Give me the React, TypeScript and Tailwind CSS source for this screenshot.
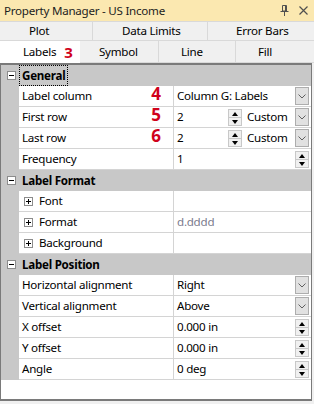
import React from "react";

function DropBtn() {
  return (
    <div className="absolute right-[2px] top-[1px] w-[14px] h-[18px] bg-[#e1e1e1] border border-[#adadad] flex items-center justify-center">
      <svg width="8" height="5" viewBox="0 0 8 5">
        <path d="M0.5 0.5 L4 4 L7.5 0.5" fill="none" stroke="#606060" strokeWidth="1" />
      </svg>
    </div>
  );
}

function Spinner({ className }: { className: string }) {
  return (
    <div className={`absolute top-[2px] w-[14px] h-[17px] flex flex-col border border-[#c8c8c8] bg-[#f0f0f0] ${className}`}>
      <div className="flex-1 flex items-center justify-center border-b border-[#c8c8c8]">
        <svg width="6" height="4" viewBox="0 0 6 4"><path d="M0 4 L3 0 L6 4 Z" fill="#000" /></svg>
      </div>
      <div className="flex-1 flex items-center justify-center">
        <svg width="6" height="4" viewBox="0 0 6 4"><path d="M0 0 L3 4 L6 0 Z" fill="#000" /></svg>
      </div>
    </div>
  );
}

function BoxIcon({ plus }: { plus?: boolean }) {
  return (
    <svg width="9" height="9" viewBox="0 0 9 9" className="shrink-0">
      <rect x="0.5" y="0.5" width="8" height="8" fill="#fff" stroke="#8c8c8c" />
      <path d="M2 4.5 H7" stroke="#000" strokeWidth="1" />
      {plus && <path d="M4.5 2 V7" stroke="#000" strokeWidth="1" />}
    </svg>
  );
}

function Header({ title, focus }: { title: string; focus?: boolean }) {
  return (
    <div className="flex h-[21px] bg-[#c8c8c8] items-center">
      <div className="w-[18px] flex justify-center pl-[2px]">
        <BoxIcon />
      </div>
      <span
        className={`font-bold px-[2px] leading-[19px] ${focus ? "border border-dotted border-black" : "border border-transparent"}`}
      >
        {title}
      </span>
    </div>
  );
}

function Row({
  name,
  marker,
  plus,
  children,
}: {
  name: string;
  marker?: string;
  plus?: boolean;
  children?: React.ReactNode;
}) {
  return (
    <div className="flex h-[21px]">
      <div className="w-[18px] bg-[#c8c8c8]" />
      <div className="relative w-[154px] bg-white border-b border-[#d4d4d4] flex items-center pl-[3px]">
        {plus && (
          <span className="ml-[2px] mr-[6px] flex">
            <BoxIcon plus />
          </span>
        )}
        <span>{name}</span>
        {marker && (
          <span className="absolute right-[12px] top-[-1px] text-[17px] tracking-normal font-bold text-[#d0021b]">{marker}</span>
        )}
      </div>
      <div className="relative flex-1 bg-white border-b border-l border-[#d4d4d4] flex items-center pl-[3px]">
        {children}
      </div>
    </div>
  );
}

export default function App() {
  return (
    <div className="w-[314px] h-[404px] bg-[#f0f0f0] text-[11.6px] tracking-[-0.25px] text-black font-['Noto_Sans',sans-serif] leading-none overflow-hidden flex flex-col">
      {/* title bar */}
      <div className="h-[21px] bg-[#fbe8b0] flex items-center pl-[4px] pr-[6px]">
        <span className="flex-1 text-[#1e1e1e]">Property Manager - US Income</span>
        <svg width="9" height="11" viewBox="0 0 9 11" className="mr-[10px]">
          <path d="M2.5 0.5 H6.5 V6 H2.5 Z M0.5 6.5 H8.5 M4.5 6.5 V11 M5.5 0.5 V6" fill="none" stroke="#505050" strokeWidth="1" />
        </svg>
        <svg width="9" height="9" viewBox="0 0 9 9">
          <path d="M0.5 0.5 L8.5 8.5 M8.5 0.5 L0.5 8.5" stroke="#505050" strokeWidth="1.2" />
        </svg>
      </div>

      {/* tabs row 1 */}
      <div className="h-[20px] flex border-t border-b border-[#d9d9d9]">
        <div className="w-[93px] border-r border-[#d9d9d9] flex items-center pl-[29px]">Plot</div>
        <div className="w-[115px] border-r border-[#d9d9d9] flex items-center pl-[29px]">Data Limits</div>
        <div className="flex-1 flex items-center pl-[28px]">Error Bars</div>
      </div>
      {/* tabs row 2 */}
      <div className="h-[22px] flex">
        <div className="w-[80px] bg-white flex items-center pl-[23px]">
          <span>Labels</span>
          <span className="ml-[8px] text-[15px] tracking-normal font-bold text-[#d0021b]">3</span>
        </div>
        <div className="w-[79px] border-r border-b border-[#d9d9d9] flex items-center pl-[19px]">Symbol</div>
        <div className="w-[77px] border-r border-b border-[#d9d9d9] flex items-center pl-[22px]">Line</div>
        <div className="flex-1 border-b border-[#d9d9d9] flex items-center pl-[22px]">Fill</div>
      </div>

      {/* grid */}
      <div className="h-[338px] w-[312px] border-t-2 border-l border-r border-b-2 border-[#7a7a7a] bg-white flex flex-col">
        <Header title="General" focus />
        <Row name="Label column" marker="4">
          <span>Column G: Labels</span>
          <DropBtn />
        </Row>
        <Row name="First row" marker="5">
          <span>2</span>
          <Spinner className="left-[54px]" />
          <span className="absolute left-[73px]">Custom</span>
          <DropBtn />
        </Row>
        <Row name="Last row" marker="6">
          <span>2</span>
          <Spinner className="left-[54px]" />
          <span className="absolute left-[73px]">Custom</span>
          <DropBtn />
        </Row>
        <Row name="Frequency">
          <span>1</span>
          <Spinner className="right-[2px]" />
        </Row>
        <Header title="Label Format" />
        <Row name="Font" plus />
        <Row name="Format" plus>
          <span className="text-[#7a7a8c]">d.dddd</span>
        </Row>
        <Row name="Background" plus />
        <Header title="Label Position" />
        <Row name="Horizontal alignment">
          <span>Right</span>
          <DropBtn />
        </Row>
        <Row name="Vertical alignment">
          <span>Above</span>
          <DropBtn />
        </Row>
        <Row name="X offset">
          <span>0.000 in</span>
          <Spinner className="right-[2px]" />
        </Row>
        <Row name="Y offset">
          <span>0.000 in</span>
          <Spinner className="right-[2px]" />
        </Row>
        <Row name="Angle">
          <span>0 deg</span>
          <Spinner className="right-[2px]" />
        </Row>
        <div className="flex-1 bg-white" />
      </div>
    </div>
  );
}
